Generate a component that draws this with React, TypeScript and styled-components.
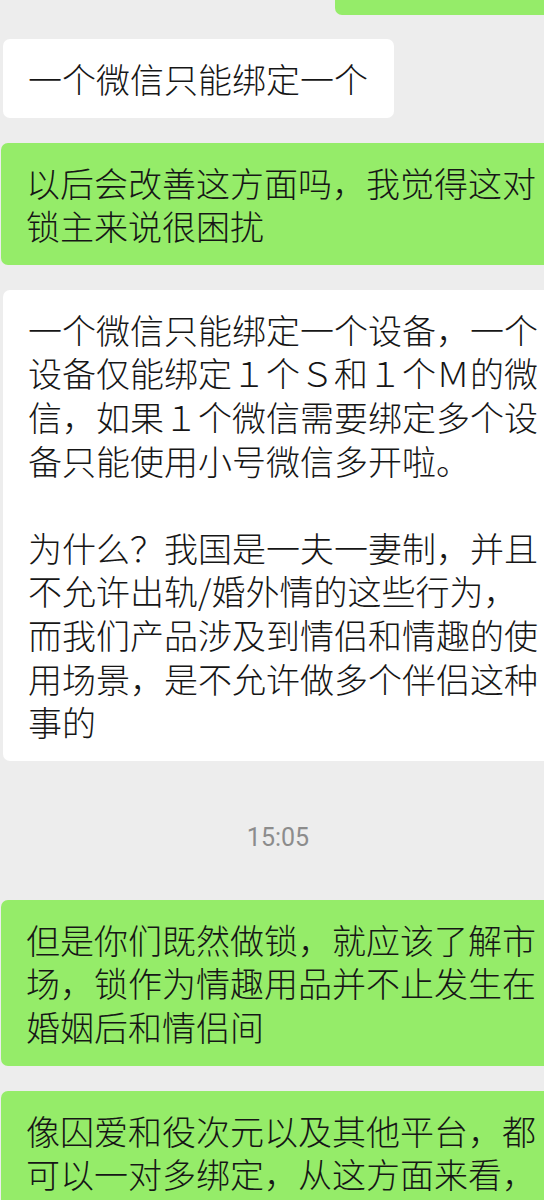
import styled, { createGlobalStyle } from "styled-components";

const GlobalStyle = createGlobalStyle`
  html, body {
    margin: 0;
    padding: 0;
    background: #ededed;
  }
  body {
    font-family: "Noto Sans CJK SC", "Noto Sans", sans-serif;
    color: #161616;
  }
`;

const Page = styled.div`
  display: flex;
  flex-direction: column;
  gap: 25px;
  width: 544px;
  min-height: 1200px;
  overflow: hidden;
  background: #ededed;
`;

// the bottom of a sent bubble cut off by the top of the screenshot
const CutBubble = styled.div`
  height: 15px;
  margin-left: 335px;
  margin-right: -24px;
  margin-bottom: -1px;
  background: #95ec69;
  border-radius: 0 0 0 7px;
`;

const Bubble = styled.div<{ $mine?: boolean; $fit?: boolean }>`
  box-sizing: border-box;
  align-self: ${(p) => (p.$fit ? "flex-start" : "stretch")};
  margin-left: ${(p) => (p.$mine ? "1px" : "3px")};
  margin-right: ${(p) => (p.$fit ? "0" : "-30px")};
  padding: 18px 26px 17px 25px;
  background: ${(p) => (p.$mine ? "#95ec69" : "#ffffff")};
  border-radius: 7px;
  font-size: 34px;
  font-weight: 300;
  line-height: 43.6px;
  white-space: nowrap;
`;

const Line = styled.div`
  min-height: 43.6px;
`;

const Time = styled.div`
  padding: 37px 0 22px 12px;
  text-align: center;
  font-family: Roboto, "Noto Sans", sans-serif;
  font-size: 25px;
  line-height: 30px;
  color: #8c8c8c;
`;

function Message({ lines, mine, fit }: { lines: string[]; mine?: boolean; fit?: boolean }) {
  return (
    <Bubble $mine={mine} $fit={fit}>
      {lines.map((l, i) => (
        <Line key={i}>{l}</Line>
      ))}
    </Bubble>
  );
}

export default function App() {
  return (
    <>
      <GlobalStyle />
      <Page>
        <CutBubble />
        <Message fit lines={["一个微信只能绑定一个"]} />
        <Message
          mine
          lines={["以后会改善这方面吗，我觉得这对", "锁主来说很困扰"]}
        />
        <Message
          lines={[
            "一个微信只能绑定一个设备，一个",
            "设备仅能绑定１个Ｓ和１个Ｍ的微",
            "信，如果１个微信需要绑定多个设",
            "备只能使用小号微信多开啦。",
            "",
            "为什么？我国是一夫一妻制，并且",
            "不允许出轨/婚外情的这些行为，",
            "而我们产品涉及到情侣和情趣的使",
            "用场景，是不允许做多个伴侣这种",
            "事的",
          ]}
        />
        <Time>15:05</Time>
        <Message
          mine
          lines={[
            "但是你们既然做锁，就应该了解市",
            "场，锁作为情趣用品并不止发生在",
            "婚姻后和情侣间",
          ]}
        />
        <Message
          mine
          lines={["像囚爱和役次元以及其他平台，都", "可以一对多绑定，从这方面来看，"]}
        />
      </Page>
    </>
  );
}
